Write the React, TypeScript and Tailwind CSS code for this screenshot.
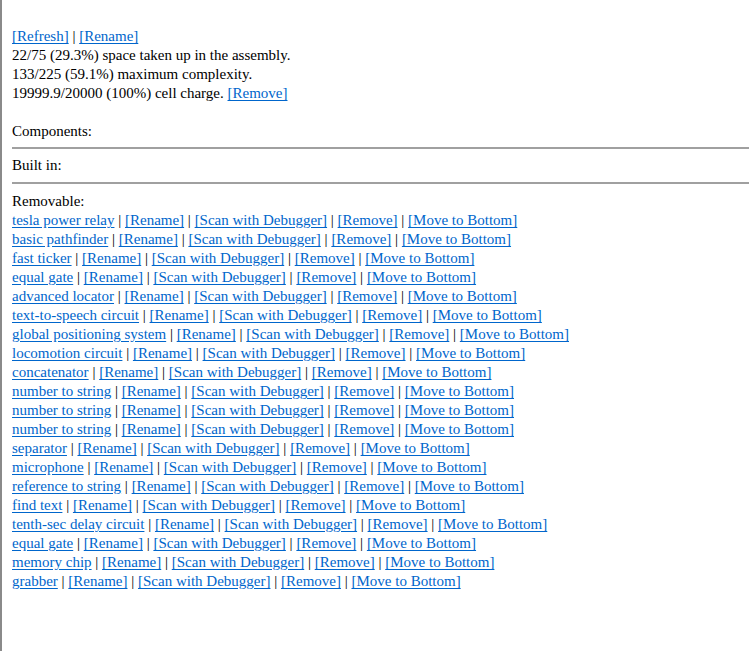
import React from 'react';

const parts = [
  'tesla power relay',
  'basic pathfinder',
  'fast ticker',
  'equal gate',
  'advanced locator',
  'text-to-speech circuit',
  'global positioning system',
  'locomotion circuit',
  'concatenator',
  'number to string',
  'number to string',
  'number to string',
  'separator',
  'microphone',
  'reference to string',
  'find text',
  'tenth-sec delay circuit',
  'equal gate',
  'memory chip',
  'grabber',
];

function A({ children }: { children: React.ReactNode }) {
  return (
    <a href="#" className="text-[#0066cc] underline underline-offset-[2px]">
      {children}
    </a>
  );
}

export default function App() {
  return (
    <div
      className="min-h-[651px] border-l-2 border-[#8a8a8a] bg-white pl-[10px] pt-[27px] text-[15px] leading-[19px] text-black"
      style={{ fontFamily: '"Liberation Serif", "Times New Roman", serif' }}
    >
      <div>
        <A>[Refresh]</A> | <A>[Rename]</A>
      </div>
      <div>22/75 (29.3%) space taken up in the assembly.</div>
      <div>133/225 (59.1%) maximum complexity.</div>
      <div>
        19999.9/20000 (100%) cell charge. <A>[Remove]</A>
      </div>
      <div className="h-[19px]" />
      <div>Components:</div>
      <hr className="mt-[6px] mb-[7px] border-t-2 border-[#a0a0a0]" />
      <div>Built in:</div>
      <hr className="mt-[7px] mb-[8px] border-t-2 border-[#a0a0a0]" />
      <div>Removable:</div>
      {parts.map((p, i) => (
        <div key={i}>
          <A>{p}</A> | <A>[Rename]</A> | <A>[Scan with Debugger]</A> | <A>[Remove]</A> |{' '}
          <A>[Move to Bottom]</A>
        </div>
      ))}
    </div>
  );
}
